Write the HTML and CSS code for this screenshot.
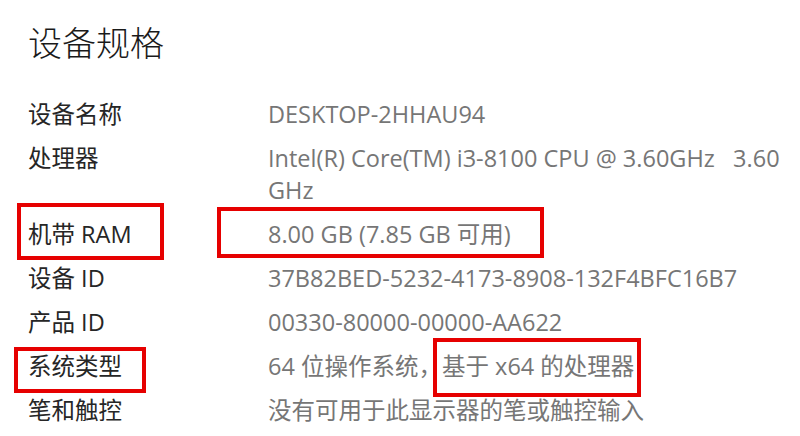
FILE: index.html
```html
<!DOCTYPE html>
<html lang="zh-CN">
<head>
<meta charset="utf-8">
<title>设备规格</title>
<link rel="stylesheet" href="styles.css">
</head>
<body>
<main class="page">
  <h1 class="title">设备规格</h1>
  <dl class="specs">
    <dt class="label">设备名称</dt>
    <dd class="value">DESKTOP-2HHAU94</dd>

    <dt class="label">处理器</dt>
    <dd class="value value-pre">Intel(R) Core(TM) i3-8100 CPU @ 3.60GHz   3.60 GHz</dd>

    <dt class="label marked mark-ram-label">机带 RAM</dt>
    <dd class="value marked mark-ram-value">8.00 GB (7.85 GB 可用)</dd>

    <dt class="label">设备 ID</dt>
    <dd class="value">37B82BED-5232-4173-8908-132F4BFC16B7</dd>

    <dt class="label">产品 ID</dt>
    <dd class="value">00330-80000-00000-AA622</dd>

    <dt class="label marked mark-type-label">系统类型</dt>
    <dd class="value">64 位操作系统，<span class="marked mark-inline">基于 x64 的处理器</span></dd>

    <dt class="label">笔和触控</dt>
    <dd class="value">没有可用于此显示器的笔或触控输入</dd>
  </dl>
</main>
</body>
</html>
```

FILE: styles.css
```css
* {
  box-sizing: border-box;
}

html, body {
  margin: 0;
  background: #ffffff;
}

body {
  font-family: "Open Sans", "Noto Sans CJK SC", sans-serif;
  color: #1a1a1a;
}

.page {
  padding: 20px 0 0 28px;
  width: 800px;
  height: 436px;
  overflow: hidden;
}

.title {
  margin: 0;
  font-family: "Noto Sans CJK SC", sans-serif;
  font-size: 34px;
  line-height: 44px;
  font-weight: 300;
  color: #1a1a1a;
}

.specs {
  margin: 34px 0 0;
  display: grid;
  grid-template-columns: 240px 520px;
  row-gap: 12px;
  font-size: 23.5px;
  line-height: 32px;
}

.label {
  margin: 0;
  color: #262626;
}

.value {
  margin: 0;
  color: #767676;
}

.value-pre {
  white-space: pre-wrap;
}

.marked {
  position: relative;
}

.marked::after {
  content: "";
  position: absolute;
  border: 4px solid #e60000;
}

.mark-ram-label::after {
  left: -11px;
  top: -15px;
  width: 139px;
  height: 49px;
}

.mark-ram-value::after {
  left: -51px;
  top: -11px;
  width: 319px;
  height: 43px;
}

.mark-type-label::after {
  left: -14px;
  top: -3px;
  width: 124px;
  height: 38px;
}

.mark-inline {
  display: inline-block;
  height: 32px;
  vertical-align: top;
}

.mark-inline::after {
  top: -12px;
  right: -7px;
  bottom: -15px;
  left: -9px;
}
```
